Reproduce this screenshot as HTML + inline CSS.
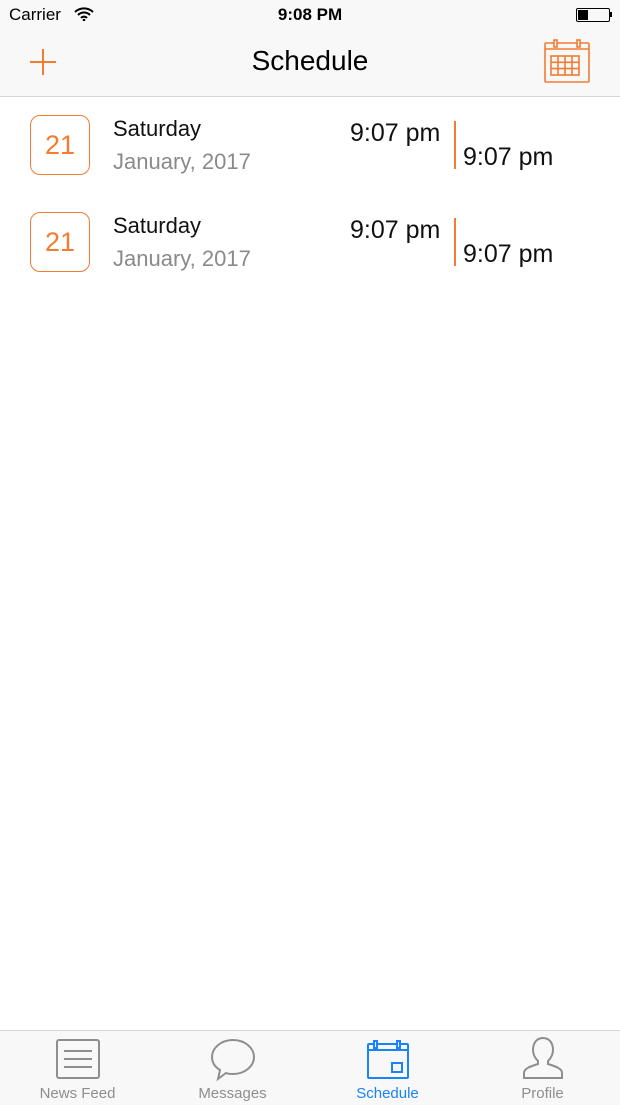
<!DOCTYPE html>
<html><head><style>
body{margin:0;width:620px;height:1104px;position:relative;background:#fff;font-family:"Liberation Sans",sans-serif;overflow:hidden}
.abs{position:absolute}
.hdr{left:0;top:0;width:620px;height:96px;background:#f8f8f8;border-bottom:1px solid #d6d6d6}
.row .box{position:absolute;left:30px;width:58px;height:58px;border:1.5px solid #f47b30;border-radius:10px;color:#f47b30;font-size:27px;text-align:center;line-height:58px}
.t{position:absolute;font-size:22px;color:#111;white-space:nowrap}
.tab{left:0;top:1030px;width:620px;height:74px;background:#f8f8f8;border-top:1px solid #d6d6d6}
.lbl{position:absolute;top:1085px;font-size:15px;color:#8e8e8e;text-align:center;width:155px}
</style></head><body>
<div class="abs hdr"></div>
<div class="abs" style="left:9px;top:5px;font-size:17px">Carrier</div>
<svg class="abs" style="left:74px;top:7px" width="20" height="14" viewBox="0 0 20 14"><path d="M1 5a13 13 0 0 1 18 0M4 8a8.5 8.5 0 0 1 12 0M7 11a4 4 0 0 1 6 0" stroke="#000" stroke-width="2" fill="none"/><circle cx="10" cy="13" r="1.3"/></svg>
<div class="abs" style="left:0;width:620px;text-align:center;top:5px;font-size:17px;font-weight:bold">9:08 PM</div>
<div class="abs" style="left:576px;top:8px;width:32px;height:12px;border:1px solid #000;border-radius:2px"><div style="width:10px;height:10px;margin:1px;background:#000"></div></div>
<div class="abs" style="left:610px;top:12px;width:2px;height:5px;background:#000"></div>
<svg class="abs" style="left:29px;top:48px" width="28" height="28"><path d="M14 1v26M1 14h26" stroke="#f47b30" stroke-width="2"/></svg>
<div class="abs" style="left:0;width:620px;text-align:center;top:45px;font-size:28px">Schedule</div>
<svg class="abs" style="left:543px;top:38px" width="48" height="46" viewBox="0 0 48 46"><g stroke="#f47b30" stroke-width="1.6" fill="none"><rect x="2" y="5" width="44" height="39" rx="1"/><line x1="2" y1="11" x2="46" y2="11"/><rect x="11" y="2" width="3" height="7" fill="#f8f8f8"/><rect x="34" y="2" width="3" height="7" fill="#f8f8f8"/><rect x="8" y="18" width="28" height="19"/><path d="M15 18v19M22 18v19M29 18v19M8 24.3h28M8 30.6h28"/></g></svg>

<div class="row">
<div class="box" style="top:115px">21</div>
<div class="t" style="left:113px;top:116px">Saturday</div>
<div class="t" style="left:113px;top:149px;color:#8a8a8a">January, 2017</div>
<div class="t" style="left:350px;top:119px;font-size:25px">9:07 pm</div>
<div class="abs" style="left:454px;top:121px;width:2px;height:48px;background:#f47b30"></div>
<div class="t" style="left:463px;top:143px;font-size:25px">9:07 pm</div>
</div>
<div class="row">
<div class="box" style="top:212px">21</div>
<div class="t" style="left:113px;top:213px">Saturday</div>
<div class="t" style="left:113px;top:246px;color:#8a8a8a">January, 2017</div>
<div class="t" style="left:350px;top:216px;font-size:25px">9:07 pm</div>
<div class="abs" style="left:454px;top:218px;width:2px;height:48px;background:#f47b30"></div>
<div class="t" style="left:463px;top:240px;font-size:25px">9:07 pm</div>
</div>

<div class="abs tab"></div>
<svg class="abs" style="left:55px;top:1038px" width="46" height="42"><g stroke="#8e8e8e" stroke-width="2" fill="none"><rect x="2" y="2" width="42" height="38" rx="2"/><path d="M9 13h28M9 21h28M9 29h28"/></g></svg>
<svg class="abs" style="left:209px;top:1038px" width="48" height="44"><path d="M24 2C12 2 3 10 3 19c0 6 3 10 8 13l-2 9 8-6c2 1 5 1 7 1 12 0 21-8 21-17S36 2 24 2z" stroke="#8e8e8e" stroke-width="2" fill="none"/></svg>
<svg class="abs" style="left:366px;top:1040px" width="44" height="40"><g stroke="#1a82fb" stroke-width="2" fill="none"><rect x="2" y="4" width="40" height="34" rx="1"/><line x1="2" y1="10" x2="42" y2="10"/><rect x="8" y="1" width="3" height="7" fill="#f8f8f8"/><rect x="31" y="1" width="3" height="7" fill="#f8f8f8"/><rect x="26" y="23" width="10" height="9"/></g></svg>
<svg class="abs" style="left:520px;top:1036px" width="46" height="46"><path d="M23 2c-7 0-10 6-10 12 0 5 3 9 5 11v3c-6 2-14 4-14 9v5h38v-5c0-5-8-7-14-9v-3c2-2 5-6 5-11 0-6-3-12-10-12z" stroke="#8e8e8e" stroke-width="2" fill="none"/></svg>
<div class="lbl" style="left:0">News Feed</div>
<div class="lbl" style="left:155px">Messages</div>
<div class="lbl" style="left:310px;color:#1a82fb">Schedule</div>
<div class="lbl" style="left:465px">Profile</div>
</body></html>
